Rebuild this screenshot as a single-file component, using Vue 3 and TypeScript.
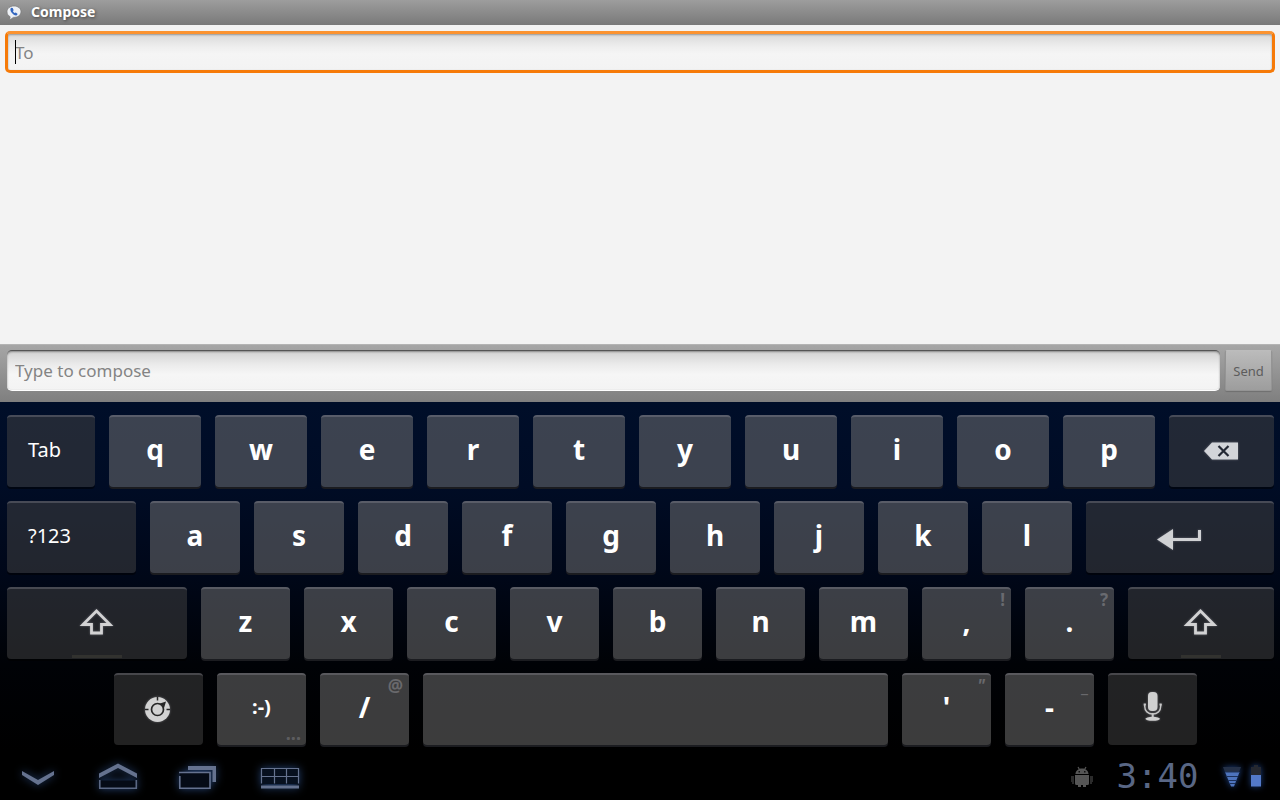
<script setup lang="ts">
import { ref } from 'vue'

type Icon = 'backspace' | 'enter' | 'shift' | 'settings' | 'mic'

interface Key {
  id: string
  span: number
  label?: string
  icon?: Icon
  dark?: boolean
  small?: boolean
  start?: boolean
  hint?: string
  more?: boolean
  spacer?: boolean
}

const letters = (text: string, span: number): Key[] =>
  text.split('').map((c) => ({ id: c, label: c, span }))

const rows: Key[][] = [
  [
    { id: 'Tab', label: 'Tab', span: 88, dark: true, start: true },
    ...letters('qwertyuiop', 92),
    { id: 'Backspace', icon: 'backspace', span: 105, dark: true },
  ],
  [
    { id: 'Symbols', label: '?123', span: 129, dark: true, start: true },
    ...letters('asdfghjkl', 90),
    { id: 'Enter', icon: 'enter', span: 188, dark: true },
  ],
  [
    { id: 'Left shift', icon: 'shift', span: 180, dark: true },
    ...letters('zxcvbnm', 89),
    { id: 'Comma', label: ',', span: 89, hint: '!' },
    { id: 'Period', label: '.', span: 89, hint: '?' },
    { id: 'Right shift', icon: 'shift', span: 146, dark: true },
  ],
  [
    { id: 'lead', span: 93, spacer: true },
    { id: 'Settings', icon: 'settings', span: 89, dark: true },
    { id: 'Smiley', label: ':-)', span: 89, small: true, more: true },
    { id: 'Slash', label: '/', span: 89, hint: '@' },
    { id: 'Space', span: 465 },
    { id: 'Apostrophe', label: "'", span: 89, hint: '"' },
    { id: 'Hyphen', label: '-', span: 89, hint: '_' },
    { id: 'Voice input', icon: 'mic', span: 89, dark: true },
    { id: 'trail', span: 63, spacer: true },
  ],
]

const recipient = ref('')
const message = ref('')
</script>

<template>
  <div class="screen">
    <header class="title-bar">
      <svg class="app-icon" width="16" height="16" viewBox="0 0 16 16" aria-hidden="true">
        <path d="M8 1C4 1 1 3.400 1 6.800c0 2.200 1.200 3.900 3.100 4.900L3.800 15l3.500-2.600C11.800 12.600 15 10.200 15 6.800 15 3.400 12 1 8 1z" fill="#eef1f6" stroke="#777" stroke-width=".7" />
        <path d="M5.300 2.800c-1.400.8-1.200 3 .4 5s3.700 3.200 5.100 2.500l.9-1.400-1.900-1.500-1.300.6c-.8-.3-1.500-1.200-1.600-1.900l.8-.9-1-2.300z" fill="#3467c0" />
      </svg>
      <h1>Compose</h1>
    </header>

    <main class="content">
      <div class="to-field">
        <input v-model="recipient" type="text" placeholder="To" aria-label="To" />
        <span v-if="!recipient" class="caret"></span>
      </div>
    </main>

    <form class="compose-bar" @submit.prevent>
      <input v-model="message" type="text" placeholder="Type to compose" aria-label="Type to compose" />
      <button type="submit">Send</button>
    </form>

    <section class="keyboard" aria-label="Keyboard">
      <div v-for="(row, r) in rows" :key="r" class="row">
        <template v-for="key in row" :key="key.id">
          <span v-if="key.spacer" class="spacer" :style="{ flexGrow: key.span }"></span>
          <button
            v-else
            type="button"
            class="key"
            :class="{ dark: key.dark, small: key.small, start: key.start }"
            :style="{ flexGrow: key.span }"
            :aria-label="key.id"
          >
            <span v-if="key.label" class="label">{{ key.label }}</span>
            <svg v-if="key.icon === 'backspace'" class="glyph" width="40" height="24" viewBox="0 0 40 24">
              <path d="M2 12l8-8.500h26v17H10z" fill="#d2d4d9" />
              <path d="M16.500 7l10 10M26.500 7l-10 10" stroke="#232834" stroke-width="2.200" />
            </svg>
            <svg v-if="key.icon === 'enter'" class="glyph" width="48" height="30" viewBox="0 0 48 30">
              <path d="M1 17.500L17 7v9h25V8h3v11H17v9z" fill="#d0d1d4" />
            </svg>
            <template v-if="key.icon === 'shift'">
              <svg class="glyph" width="36" height="30" viewBox="0 0 36 30">
                <path d="M17.500 3L31 16.500h-8.500V25h-10v-8.500H4z" fill="none" stroke="#d2d2d3" stroke-width="2.800" />
              </svg>
              <span class="lock"></span>
            </template>
            <svg v-if="key.icon === 'settings'" class="glyph" width="30" height="28" viewBox="0 0 30 28">
              <circle cx="13.500" cy="14.500" r="12.500" fill="#d2d2d2" />
              <path d="M13.500 1.500v4M1 14.500h3.500M22.500 14.500H26" stroke="#262626" stroke-width="1.500" />
              <path d="M14.500 9L22 6.500l-2.500 8z" fill="#262626" />
              <circle cx="13.500" cy="14.500" r="6" fill="#d2d2d2" stroke="#262626" stroke-width="1.700" />
            </svg>
            <svg v-if="key.icon === 'mic'" class="glyph" width="24" height="34" viewBox="0 0 24 34">
              <rect x="7" y="0" width="9.500" height="19" rx="4" fill="#d0d0d0" />
              <path d="M3.700 12v2c0 5 3.400 8 8 8s8-3 8-8v-2" fill="none" stroke="#c6c6c6" stroke-width="1.500" />
              <path d="M2.700 12.500h2.200M18.500 12.500h2.200M11.700 21v5" stroke="#c6c6c6" stroke-width="2" />
              <ellipse cx="11.700" cy="26.800" rx="7.300" ry="2" fill="#d0d0d0" />
            </svg>
            <span v-if="key.hint" class="hint" :class="{ slanted: key.hint === '&quot;' }">{{ key.hint }}</span>
            <span v-if="key.more" class="more">...</span>
          </button>
        </template>
      </div>
    </section>

    <footer class="system-bar">
      <nav>
        <button type="button" aria-label="Hide keyboard">
          <svg width="80" height="48" viewBox="0 0 80 48"><path d="M22 19l16 9 16-9v4l-16 10-16-10z" fill="#65728f" /></svg>
        </button>
        <button type="button" aria-label="Home">
          <svg width="80" height="48" viewBox="0 0 80 48">
            <path d="M19 28.500h38V37H19z" fill="#050b16" />
            <path d="M19 21.500l19-10 19 10V26L38 16 19 26z" fill="#65728f" />
            <path d="M19.800 28v8.300h36.500V28" fill="none" stroke="#5b6884" stroke-width="1.600" />
          </svg>
        </button>
        <button type="button" aria-label="Recent apps">
          <svg width="80" height="48" viewBox="0 0 80 48">
            <path d="M20 21h30v15H20z" fill="#050b16" />
            <path d="M28 14h28v16h-3.500V18H28z" fill="#65728f" />
            <path d="M19 20.500h31v15.800H19.800V24" fill="none" stroke="#65728f" stroke-width="1.600" />
          </svg>
        </button>
        <button type="button" aria-label="Switch keyboard">
          <svg width="80" height="48" viewBox="0 0 80 48">
            <path d="M21 17h38v15H21z" fill="#07101f" />
            <path d="M21.500 31.500v-15h37v15M21 24.500h38M34.500 17v14.500M46.500 17v14.500" fill="none" stroke="#65728f" stroke-width="1.200" />
            <path d="M21 33.500h38v3H21z" fill="#65728f" />
          </svg>
        </button>
      </nav>
      <div class="status">
        <svg width="22" height="24" viewBox="0 0 22 24" aria-hidden="true">
          <path d="M4.500 10c0-3 2.500-5.500 6.500-5.500s6.500 2.500 6.500 5.500zM4 11h14v8.500q0 1.500-1.500 1.500H15v2h-3v-2h-2v2H7v-2H5.500Q4 21 4 19.500z" fill="#565656" />
          <path d="M7 3l1.500 2.500M15 3l-1.500 2.500M0 13h3M0 15h3M0 17h3M1 19h2M19 13h3M19 15h3M19 17h3M19 19h2" stroke="#565656" stroke-width="1.200" />
          <path d="M7.500 7h1.500v1.500H7.500zM13 7h1.500v1.500H13z" fill="#111" />
        </svg>
        <time datetime="03:40">3:40</time>
        <svg class="glow" width="20" height="24" viewBox="0 0 20 24" aria-label="Wi-Fi signal">
          <path d="M1 3h18l-2 5H3z" fill="#243047" />
          <path d="M3 8h14.500L12 22.500H9z" fill="#4e74bd" />
          <path d="M3 8h14M4 12.500h12M6 16.500h8M7 19.500h6" stroke="#1c3059" stroke-width="1" />
        </svg>
        <svg class="glow" width="12" height="24" viewBox="0 0 12 24" aria-label="Battery">
          <path d="M4 1h4v2h3v8H1V3h3z" fill="#252830" />
          <path d="M1 11h10v11.500H1z" fill="#5379c8" />
        </svg>
      </div>
    </footer>
  </div>
</template>

<style>
body {
  background: #000;
}
</style>

<style scoped>
.screen {
  display: flex;
  flex-direction: column;
  min-height: 100vh;
  font-family: "Noto Sans", "Open Sans", sans-serif;
  background: #000;
}

* {
  box-sizing: border-box;
}

button,
input {
  font-family: inherit;
  margin: 0;
}

.title-bar {
  display: flex;
  align-items: flex-start;
  gap: 9px;
  height: 25px;
  padding: 0 6px;
  background: linear-gradient(#9d9d9d, #797979);
}

.app-icon {
  align-self: center;
}

.title-bar h1 {
  margin: 0;
  font-size: 14px;
  line-height: 24px;
  font-weight: 700;
  color: #fff;
  text-shadow: 1px 1px 3px #444;
}

.content {
  flex: 1;
  padding: 6px 5px;
  background: #f3f3f3;
}

.to-field {
  position: relative;
}

.to-field input {
  display: block;
  width: 100%;
  height: 42px;
  padding: 0 7px;
  border: 3px solid #f67a08;
  border-top-color: #fb9330;
  border-radius: 5px;
  outline: none;
  font-size: 17px;
  background: linear-gradient(#d9d9d9, #eee 35%, #f5f5f5 55%, #f3f3f3);
  box-shadow: inset 0 1px 2px #999;
}

.caret {
  position: absolute;
  left: 10px;
  top: 9px;
  width: 1px;
  height: 24px;
  background: #000;
}

input::placeholder {
  color: #848484;
  opacity: 1;
}

.compose-bar {
  display: flex;
  align-items: flex-start;
  gap: 5px;
  height: 58px;
  padding: 5px 8px 0 7px;
  border-top: 1px solid #b4b4b4;
  background: linear-gradient(#a6a6a6, #7f7f7f);
}

.compose-bar input {
  flex: 1;
  min-width: 0;
  height: 41px;
  padding: 0 8px;
  border: 0;
  border-top: 1px solid #555;
  border-bottom: 1px solid #fff;
  border-radius: 5px;
  outline: none;
  font-size: 17px;
  background: linear-gradient(#d2d2d2, #ebebeb 35%, #f6f6f6 60%, #f3f3f3);
  box-shadow: inset 0 1px 2px #888;
}

.compose-bar button {
  width: 47px;
  height: 41px;
  padding: 0;
  border: 1px solid #949494;
  border-top-color: #bcbcbc;
  border-radius: 2px;
  font-size: 13px;
  color: #5c5c5c;
  background: linear-gradient(#bbb, #9d9d9d);
  box-shadow: 0 1px 1px #6f6f6f;
}

.keyboard {
  display: flex;
  flex-direction: column;
  gap: 14px;
  padding: 13px 6px 7px 7px;
  background: linear-gradient(#000e29, #000c25 24%, #000718 50%, #000206 75%, #000);
}

.row {
  display: flex;
  gap: 14px;
}

.spacer {
  flex: 1 1 0;
}

.key {
  position: relative;
  display: flex;
  flex: 1 1 0;
  align-items: center;
  justify-content: center;
  min-width: 0;
  height: 72px;
  padding: 0 0 6px;
  border: 0;
  border-top: 2px solid rgba(160, 160, 170, 0.3);
  border-radius: 4px;
  font-size: 28px;
  line-height: 36px;
  font-weight: 700;
  color: #fff;
  background: rgba(120, 120, 120, 0.5);
  box-shadow: 0 2px 0 #1b1c20;
}

.key.dark {
  background: rgba(68, 68, 68, 0.5);
  box-shadow: 0 2px 0 rgba(0, 0, 0, 0.5);
}

.key.small {
  font-size: 20px;
}

.key.start {
  justify-content: flex-start;
  padding-bottom: 4px;
  font-size: 20px;
  font-weight: 400;
}

.start .label {
  margin-left: 21px;
}

.glyph {
  display: block;
  flex: none;
  margin-top: 4px;
  filter: drop-shadow(0 0 1px rgba(200, 200, 210, 0.4));
}

.hint {
  position: absolute;
  top: 0;
  right: 6px;
  font-size: 17px;
  line-height: 22px;
  font-weight: 700;
  color: rgba(150, 150, 155, 0.5);
}

.hint.slanted {
  font-style: italic;
}

.more {
  position: absolute;
  right: 5px;
  bottom: 3px;
  font-size: 18px;
  line-height: 18px;
  color: rgba(150, 150, 155, 0.4);
}

.lock {
  position: absolute;
  bottom: 1px;
  left: 36%;
  width: 28%;
  height: 3px;
  background: #32322f;
}

.system-bar {
  display: flex;
  align-items: center;
  justify-content: space-between;
  height: 48px;
  padding-right: 18px;
  background: #000;
}

.system-bar nav {
  display: flex;
}

.system-bar nav button {
  padding: 0;
  border: 0;
  background: none;
}

.system-bar nav svg {
  display: block;
  filter: drop-shadow(0 0 4px #24406e);
}

.status {
  display: flex;
  align-items: center;
  gap: 8px;
}

.status time {
  width: 113px;
  font-family: "DejaVu Sans Mono", monospace;
  font-size: 34px;
  line-height: 40px;
  text-align: center;
  color: #596785;
}

.glow {
  filter: drop-shadow(0 0 3px #1c3f80);
}
</style>
